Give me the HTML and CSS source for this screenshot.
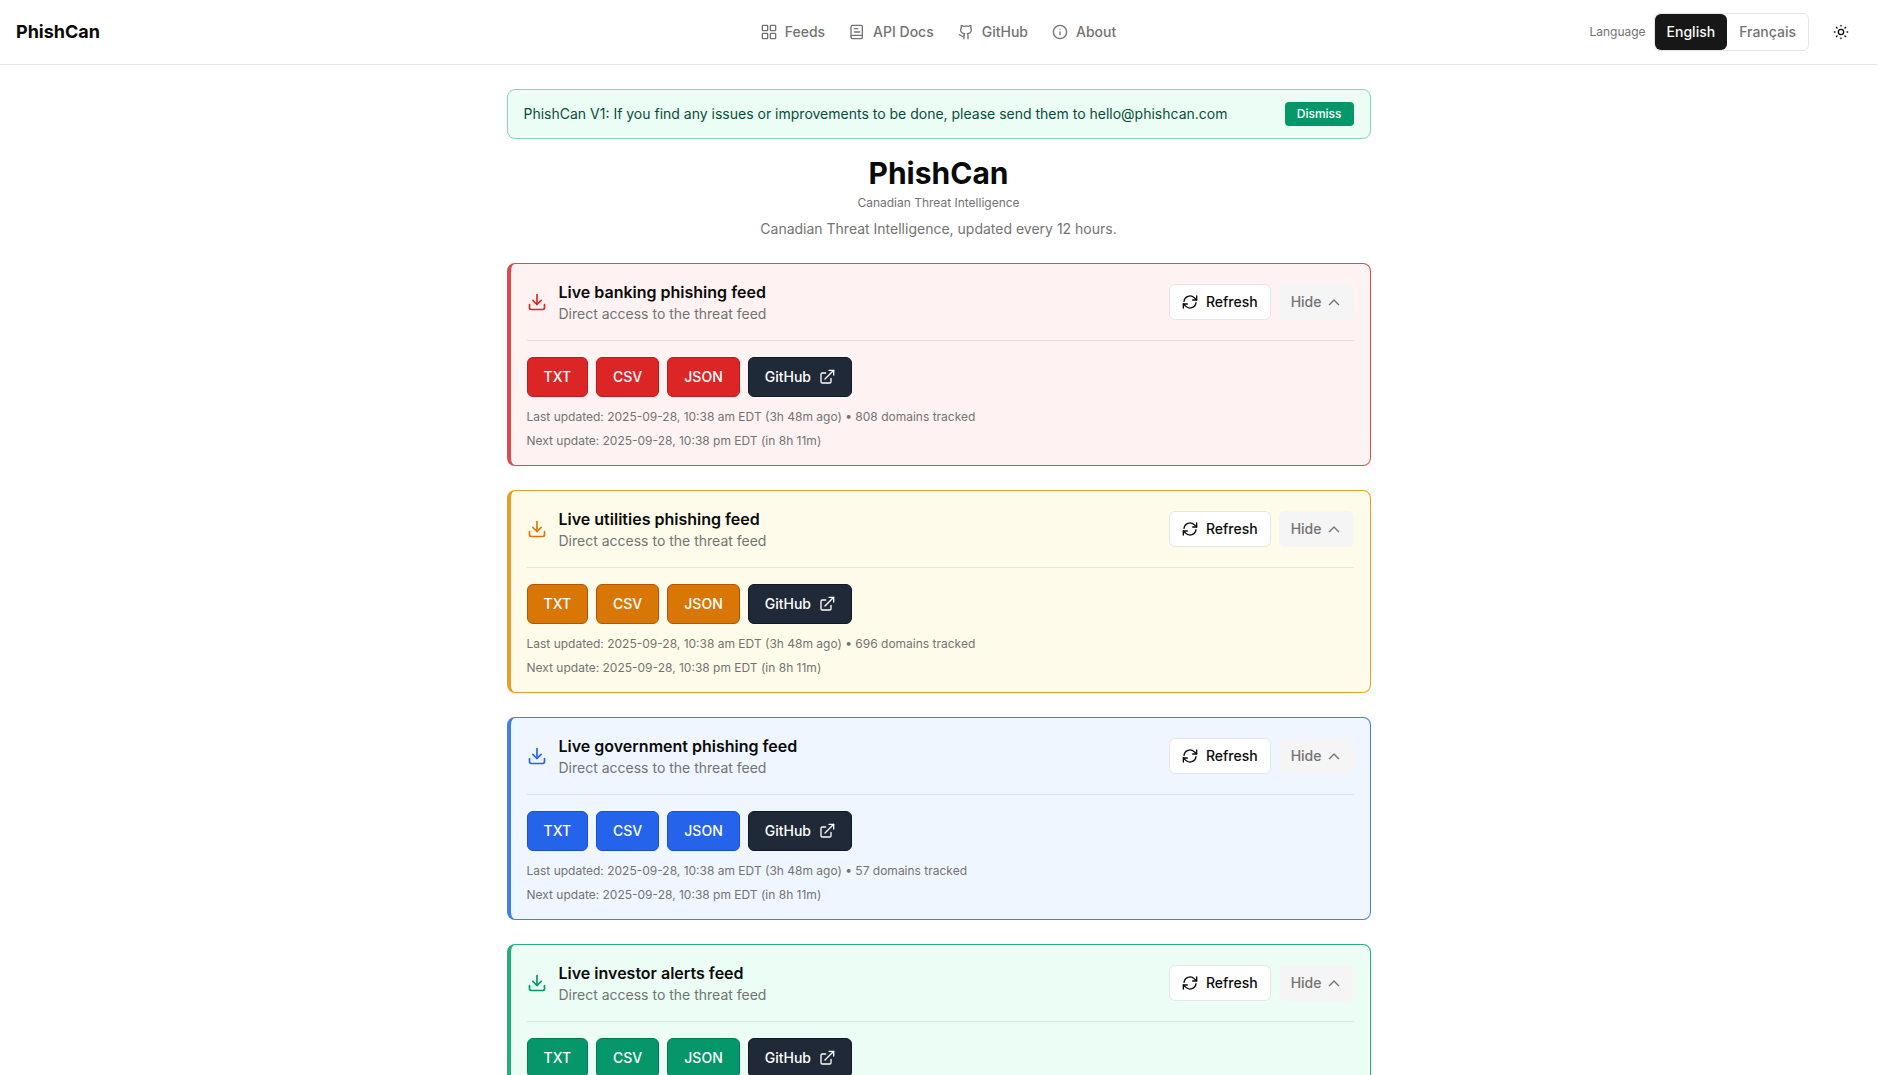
FILE: index.html
```
<!DOCTYPE html>
<html lang="en">
  <head>
    <meta charset="UTF-8" />
    <meta name="viewport" content="width=device-width, initial-scale=1.0" />
    <title>PhishCan</title>
    <link rel="stylesheet" href="styles.css">
  </head>
  <body>
    <!-- Shared icons -->
    <svg class="sprite" aria-hidden="true">
      <symbol id="icon-download" viewBox="0 0 24 24">
        <path d="M3 15v4a2 2 0 0 0 2 2h14a2 2 0 0 0 2-2v-4" />
        <path d="M7 10l5 5 5-5" />
        <path d="M12 3v12" />
      </symbol>
      <symbol id="icon-refresh" viewBox="0 0 24 24">
        <path d="M3 11a9 9 0 0 1 15.500-5.200L22 9" />
        <path d="M22 3v6h-6" />
        <path d="M21 13a9 9 0 0 1-15.500 5.200L2 15" />
        <path d="M2 21v-6h6" />
      </symbol>
      <symbol id="icon-chevron" viewBox="0 0 24 24">
        <path d="M5 16l7-7 7 7" />
      </symbol>
      <symbol id="icon-external" viewBox="0 0 24 24">
        <path d="M10 6H5a2 2 0 0 0-2 2v11a2 2 0 0 0 2 2h11a2 2 0 0 0 2-2v-5" />
        <path d="M15 2h7v7" />
        <path d="M9 15L22 2" />
      </symbol>
    </svg>

    <header class="site-header">
      <a class="brand" href="#">PhishCan</a>
      <nav class="main-nav">
        <a href="#feeds">
          <svg class="icon" viewBox="0 0 24 24"><rect x="2" y="2" width="8" height="8" rx="1" /><rect x="14" y="2" width="8" height="8" rx="1" /><rect x="2" y="14" width="8" height="8" rx="1" /><rect x="14" y="14" width="8" height="8" rx="1" /></svg>
          Feeds
        </a>
        <a href="#docs">
          <svg class="icon" viewBox="0 0 24 24"><rect x="3" y="2" width="17" height="20" rx="2" /><path d="M3 19a2 2 0 0 1 2-2h15" /><path d="M8 7h5M8 12h8" /></svg>
          API Docs
        </a>
        <a href="#github">
          <svg class="icon" viewBox="0 0 24 24"><path d="M15 22v-4a4.8 4.8 0 0 0-1-3.5c3 0 6-2 6-5.5.08-1.25-.27-2.48-1-3.5.28-1.15.28-2.35 0-3.5 0 0-1 0-3 1.5-2.64-.5-5.36-.5-8 0C6 2 5 2 5 2c-.3 1.15-.3 2.35 0 3.5A5.4 5.4 0 0 0 4 9c0 3.5 3 5.5 6 5.5-.39.49-.68 1.05-.85 1.65-.17.6-.22 1.23-.15 1.85v4" /><path d="M9 18c-4.51 2-5-2-7-2" /></svg>
          GitHub
        </a>
        <a href="#about">
          <svg class="icon" viewBox="0 0 24 24"><circle cx="12" cy="12" r="10" /><path d="M12 16v-4M12 8h.01" /></svg>
          About
        </a>
      </nav>
      <div class="header-tools">
        <span class="language-label" id="languageLabel">Language</span>
        <div class="language-switch" role="group" aria-labelledby="languageLabel">
          <button class="active" type="button" aria-pressed="true">English</button>
          <button type="button" aria-pressed="false">Français</button>
        </div>
        <button class="theme-button" type="button" aria-label="Toggle theme">
          <svg class="icon" viewBox="0 0 24 24"><circle cx="12" cy="12" r="4" /><path d="M12 2v1M12 21v1M2 12h1M21 12h1M5 5l1 1M18 18l1 1M5 19l1-1M18 6l1-1" /></svg>
        </button>
      </div>
    </header>

    <main class="page">
      <div class="notice" id="notice">
        <p>PhishCan V1: If you find any issues or improvements to be done, please send them to hello@phishcan.com</p>
        <button type="button" id="dismissNotice">Dismiss</button>
      </div>

      <div class="intro">
        <h1>PhishCan</h1>
        <p class="tagline">Canadian Threat Intelligence</p>
        <p class="description">Canadian Threat Intelligence, updated every 12 hours.</p>
      </div>

      <div class="feeds" id="feeds">
        <section class="feed banking">
          <div class="feed-header">
            <svg class="icon feed-icon"><use href="#icon-download" /></svg>
            <div class="feed-title">
              <h2>Live banking phishing feed</h2>
              <p>Direct access to the threat feed</p>
            </div>
            <button class="refresh-button" type="button"><svg class="icon"><use href="#icon-refresh" /></svg>Refresh</button>
            <button class="hide-button" type="button">Hide<svg class="icon"><use href="#icon-chevron" /></svg></button>
          </div>
          <div class="feed-body">
            <div class="feed-links">
              <a href="#">TXT</a>
              <a href="#">CSV</a>
              <a href="#">JSON</a>
              <a class="github-link" href="#">GitHub<svg class="icon"><use href="#icon-external" /></svg></a>
            </div>
            <p class="updated">Last updated: 2025-09-28, 10:38 am EDT (3h 48m ago) • 808 domains tracked</p>
            <p class="next-update">Next update: 2025-09-28, 10:38 pm EDT (in 8h 11m)</p>
          </div>
        </section>

        <section class="feed utilities">
          <div class="feed-header">
            <svg class="icon feed-icon"><use href="#icon-download" /></svg>
            <div class="feed-title">
              <h2>Live utilities phishing feed</h2>
              <p>Direct access to the threat feed</p>
            </div>
            <button class="refresh-button" type="button"><svg class="icon"><use href="#icon-refresh" /></svg>Refresh</button>
            <button class="hide-button" type="button">Hide<svg class="icon"><use href="#icon-chevron" /></svg></button>
          </div>
          <div class="feed-body">
            <div class="feed-links">
              <a href="#">TXT</a>
              <a href="#">CSV</a>
              <a href="#">JSON</a>
              <a class="github-link" href="#">GitHub<svg class="icon"><use href="#icon-external" /></svg></a>
            </div>
            <p class="updated">Last updated: 2025-09-28, 10:38 am EDT (3h 48m ago) • 696 domains tracked</p>
            <p class="next-update">Next update: 2025-09-28, 10:38 pm EDT (in 8h 11m)</p>
          </div>
        </section>

        <section class="feed government">
          <div class="feed-header">
            <svg class="icon feed-icon"><use href="#icon-download" /></svg>
            <div class="feed-title">
              <h2>Live government phishing feed</h2>
              <p>Direct access to the threat feed</p>
            </div>
            <button class="refresh-button" type="button"><svg class="icon"><use href="#icon-refresh" /></svg>Refresh</button>
            <button class="hide-button" type="button">Hide<svg class="icon"><use href="#icon-chevron" /></svg></button>
          </div>
          <div class="feed-body">
            <div class="feed-links">
              <a href="#">TXT</a>
              <a href="#">CSV</a>
              <a href="#">JSON</a>
              <a class="github-link" href="#">GitHub<svg class="icon"><use href="#icon-external" /></svg></a>
            </div>
            <p class="updated">Last updated: 2025-09-28, 10:38 am EDT (3h 48m ago) • 57 domains tracked</p>
            <p class="next-update">Next update: 2025-09-28, 10:38 pm EDT (in 8h 11m)</p>
          </div>
        </section>

        <section class="feed investor">
          <div class="feed-header">
            <svg class="icon feed-icon"><use href="#icon-download" /></svg>
            <div class="feed-title">
              <h2>Live investor alerts feed</h2>
              <p>Direct access to the threat feed</p>
            </div>
            <button class="refresh-button" type="button"><svg class="icon"><use href="#icon-refresh" /></svg>Refresh</button>
            <button class="hide-button" type="button">Hide<svg class="icon"><use href="#icon-chevron" /></svg></button>
          </div>
          <div class="feed-body">
            <div class="feed-links">
              <a href="#">TXT</a>
              <a href="#">CSV</a>
              <a href="#">JSON</a>
              <a class="github-link" href="#">GitHub<svg class="icon"><use href="#icon-external" /></svg></a>
            </div>
          </div>
        </section>
      </div>
    </main>

    <script>
      document.getElementById("dismissNotice").addEventListener("click", () => {
        document.getElementById("notice").style.display = "none";
      });

      // Collapse or expand a feed
      document.querySelectorAll(".hide-button").forEach((button) => {
        button.addEventListener("click", () => {
          button.closest(".feed").classList.toggle("collapsed");
        });
      });
    </script>
  </body>
</html>
```
FILE: styles.css
```
* {
  box-sizing: border-box;
}
html {
  scrollbar-width: none;
}
body {
  margin: 0;
  font-family: Inter, sans-serif;
  font-size: 14px;
  line-height: 20px;
  background-color: #fff;
  color: #0a0a0a;
}
h1,
h2,
p {
  margin: 0;
}
a {
  color: inherit;
  text-decoration: none;
}
button {
  font: inherit;
  font-weight: 500;
  border: none;
  background: none;
  color: inherit;
  cursor: pointer;
}
.sprite {
  display: none;
}
.icon {
  width: 16px;
  height: 16px;
  flex-shrink: 0;
  fill: none;
  stroke: currentColor;
  stroke-width: 2;
  stroke-linecap: round;
  stroke-linejoin: round;
}

/* Header */
.site-header {
  display: grid;
  grid-template-columns: 1fr auto 1fr;
  align-items: center;
  min-height: 65px;
  padding: 0 16px;
  border-bottom: 1px solid #e5e5e5;
}
.brand {
  font-size: 18px;
  line-height: 28px;
  font-weight: 700;
}
.main-nav {
  display: flex;
  gap: 24px;
  font-weight: 500;
  color: #737373;
}
.main-nav a {
  display: flex;
  align-items: center;
  gap: 8px;
}
.main-nav a:hover {
  color: #0a0a0a;
}
.header-tools {
  display: flex;
  align-items: center;
  justify-content: flex-end;
}
.language-label {
  margin-right: 8px;
  font-size: 12px;
  line-height: 16px;
  color: #737373;
}
.language-switch {
  display: flex;
  margin-right: 12px;
  border: 1px solid #e5e5e5;
  border-radius: 6px;
}
.language-switch button {
  height: 36px;
  padding: 0 12px;
  border-radius: 6px;
  color: #737373;
}
.language-switch .active {
  background-color: #171717;
  color: #fafafa;
}
.theme-button {
  display: flex;
  align-items: center;
  justify-content: center;
  width: 40px;
  height: 40px;
  padding: 0;
  border-radius: 6px;
}

/* Page */
.page {
  max-width: 896px;
  margin: 0 auto;
  padding: 24px 16px;
}
.notice {
  display: flex;
  align-items: center;
  justify-content: space-between;
  gap: 16px;
  padding: 12px 16px;
  border: 1px solid #7dd9b8;
  border-radius: 8px;
  background-color: #ecfdf5;
  color: #064e3b;
}
.notice button {
  padding: 4px 12px;
  border-radius: 4px;
  background-color: #059669;
  color: #fff;
  font-size: 12px;
  line-height: 16px;
}
.intro {
  margin: 16px 0 24px;
  text-align: center;
  color: #737373;
}
.intro h1 {
  font-size: 30px;
  line-height: 36px;
  font-weight: 700;
  color: #0a0a0a;
}
.tagline {
  margin-top: 4px;
  font-size: 12px;
  line-height: 16px;
}
.description {
  margin-top: 8px;
}

/* Feeds */
.feeds {
  display: flex;
  flex-direction: column;
  gap: 24px;
}
.feed {
  padding: 16px;
  border: 1px solid var(--line);
  border-left-width: 4px;
  border-radius: 8px;
  background-color: var(--tint);
}
.banking {
  --line: #dc4a50;
  --tint: #fef2f2;
  --accent: #dc2626;
  --accent-dark: #b91c1c;
}
.utilities {
  --line: #e5a02c;
  --tint: #fffbeb;
  --accent: #d97706;
  --accent-dark: #b45309;
}
.government {
  --line: #4380e0;
  --tint: #eff6ff;
  --accent: #2563eb;
  --accent-dark: #1d4ed8;
}
.investor {
  --line: #25ad7c;
  --tint: #ecfdf5;
  --accent: #059669;
  --accent-dark: #047857;
}
.feed-header {
  display: flex;
  align-items: center;
  padding-bottom: 16px;
}
.feed-icon {
  width: 20px;
  height: 20px;
  margin-right: 12px;
  color: var(--accent);
}
.feed-title {
  flex: 1;
}
.feed-title h2 {
  font-size: 16px;
  line-height: 24px;
  font-weight: 600;
}
.feed-title p {
  color: #737373;
}
.refresh-button,
.hide-button {
  display: flex;
  align-items: center;
  height: 36px;
  padding: 0 12px;
  border-radius: 6px;
}
.refresh-button {
  gap: 8px;
  margin-right: 8px;
  border: 1px solid #e5e5e5;
  background-color: #fff;
}
.hide-button {
  gap: 4px;
  background-color: #f5f5f5;
  color: #737373;
}
.feed-body {
  padding-top: 16px;
  border-top: 1px solid rgba(0, 0, 0, 0.08);
}
.collapsed .feed-body {
  display: none;
}
.feed-links {
  display: flex;
  flex-wrap: wrap;
  gap: 8px;
}
.feed-links a {
  display: flex;
  align-items: center;
  gap: 8px;
  height: 40px;
  padding: 0 16px;
  border: 1px solid var(--accent-dark);
  border-radius: 6px;
  background-color: var(--accent);
  color: #fff;
  font-weight: 500;
}
.feed-links .github-link {
  border-color: #111827;
  background-color: #1f2937;
}
.updated,
.next-update {
  margin-top: 12px;
  font-size: 12px;
  line-height: 16px;
  color: #737373;
}
.next-update {
  margin-top: 8px;
}
```
